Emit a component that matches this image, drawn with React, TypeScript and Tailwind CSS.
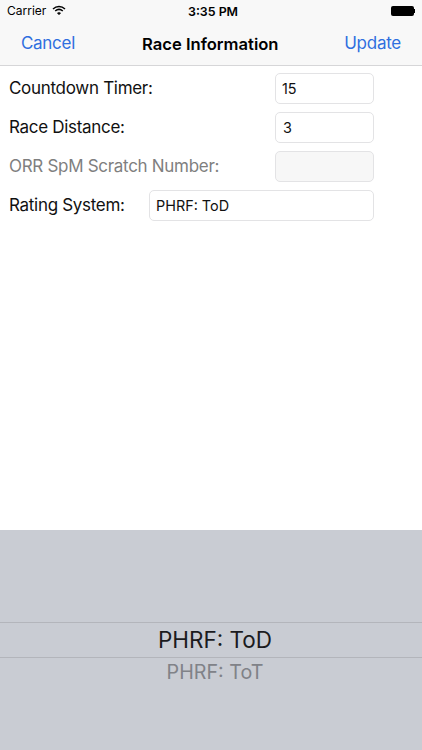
export default function App() {
  const font = "[font-family:Inter,'Liberation_Sans',sans-serif]";
  return (
    <div className={`w-[422px] h-[750px] bg-white flex flex-col overflow-hidden ${font}`}>
      <div className="h-[66px] bg-[#f8f8f8] border-b border-[#d6d6d8] flex flex-col shrink-0">
        <div className="h-[21px] flex items-center justify-between pl-[7px] pr-[7px] relative">
          <div className="flex items-center gap-[6px] text-[12px] text-black">
            <span>Carrier</span>
            <svg width="14" height="11" viewBox="0 0 14 11" fill="none" stroke="black">
              <path d="M1 4 C4.5 0.8 9.5 0.8 13 4" strokeWidth="1.5" />
              <path d="M3.2 6 C5.5 4 8.5 4 10.8 6" strokeWidth="1.5" />
              <path d="M5.4 8 L7 9.8 L8.6 8 C7.6 7.2 6.4 7.2 5.4 8 Z" fill="black" strokeWidth="0.6" />
            </svg>
          </div>
          <span className="absolute left-[188px] top-[3px] text-[12.4px] font-semibold text-black">3:35 PM</span>
          <div className="flex items-center">
            <div className="w-[23px] h-[10px] bg-black rounded-[2px]" />
            <div className="w-[1.5px] h-[4px] bg-black" />
          </div>
        </div>
        <div className="flex-1 flex items-center justify-between pl-[21px] pr-[21px] pt-[2px] relative">
          <span className="text-[17px] tracking-[-0.3px] text-[#2f6fdf]">Cancel</span>
          <span className="absolute left-[142px] text-[16.6px] font-semibold text-black">Race Information</span>
          <span className="text-[17px] tracking-[-0.25px] text-[#2f6fdf]">Update</span>
        </div>
      </div>
      <div className="flex-1 flex flex-col pt-[7px] pl-[9px] gap-[8px]">
        <div className="flex items-center h-[31px]">
          <span className="w-[266px] pt-[1px] text-[17px] tracking-[-0.3px] text-[#111]">Countdown Timer:</span>
          <div className="w-[99px] h-[31px] border border-[#e3e3e5] rounded-[5px] flex items-center pl-[6px] text-[14.4px] text-[#111]">15</div>
        </div>
        <div className="flex items-center h-[31px]">
          <span className="w-[266px] pt-[1px] text-[17px] tracking-[-0.3px] text-[#111]">Race Distance:</span>
          <div className="w-[99px] h-[31px] border border-[#e3e3e5] rounded-[5px] flex items-center pl-[7px] text-[14.4px] text-[#111]">3</div>
        </div>
        <div className="flex items-center h-[31px]">
          <span className="w-[266px] pt-[1px] text-[17px] tracking-[-0.3px] text-[#7f7f7f]">ORR SpM Scratch Number:</span>
          <div className="w-[99px] h-[31px] border border-[#e3e3e5] bg-[#f7f7f7] rounded-[5px]" />
        </div>
        <div className="flex items-center h-[31px]">
          <span className="w-[140px] pt-[1px] text-[17px] tracking-[-0.3px] text-[#111]">Rating System:</span>
          <div className="w-[225px] h-[31px] border border-[#e3e3e5] rounded-[5px] flex items-center pl-[6px] text-[14.4px] text-[#111]">PHRF: ToD</div>
        </div>
      </div>
      <div className="h-[220px] shrink-0 bg-[#c9ccd3] flex flex-col">
        <div className="h-[93px] border-b border-[#b3b5bb] shrink-0" />
        <div className="h-[35px] border-b border-[#b3b5bb] flex items-center justify-center pl-[8px] text-[22.5px] text-[#1b1b1e] shrink-0">PHRF: ToD</div>
        <div className="h-[29px] flex items-center justify-center pl-[8px] text-[19.7px] text-[#808288] shrink-0">PHRF: ToT</div>
      </div>
    </div>
  );
}
